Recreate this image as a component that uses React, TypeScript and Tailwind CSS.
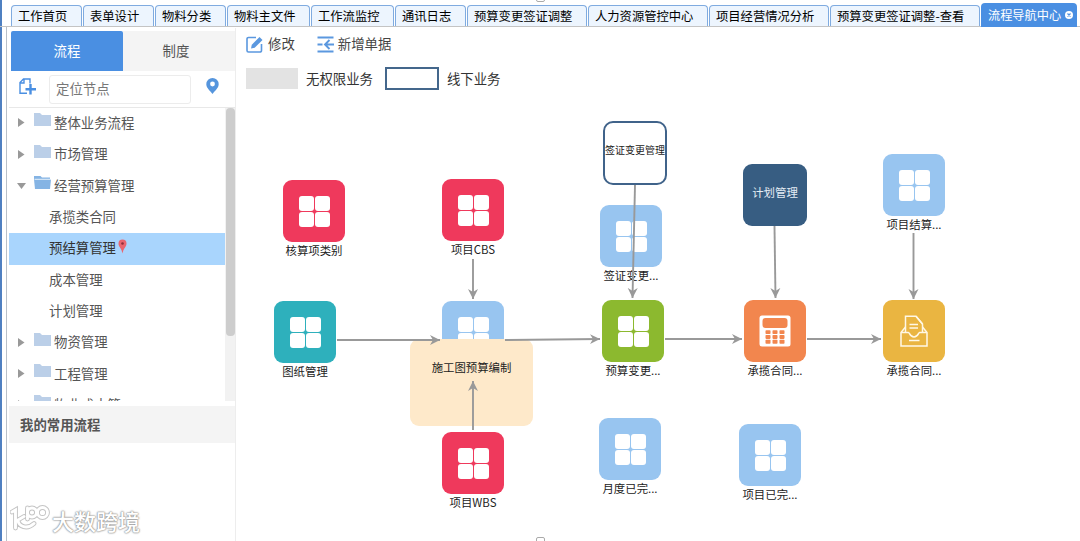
import React, { useState } from 'react';

type IconKind = 'grid' | 'calc' | 'inbox';

interface FlowNode {
  x: number;
  y: number;
  label: string;
  color: string;
  icon?: IconKind;
}

interface TreeItem {
  label: string;
  kind: 'closed' | 'open' | 'leaf';
}

const tabs = [
  { label: '工作首页', width: 'w-[72px]' },
  { label: '表单设计', width: 'w-[72px]' },
  { label: '物料分类', width: 'w-[72px]' },
  { label: '物料主文件', width: 'w-[84px]' },
  { label: '工作流监控', width: 'w-[84px]' },
  { label: '通讯日志', width: 'w-[72px]' },
  { label: '预算变更签证调整', width: 'w-[121px]' },
  { label: '人力资源管控中心', width: 'w-[121px]' },
  { label: '项目经营情况分析', width: 'w-[121px]' },
  { label: '预算变更签证调整-查看', width: 'w-[151px]' },
];

const tree: TreeItem[] = [
  { label: '整体业务流程', kind: 'closed' },
  { label: '市场管理', kind: 'closed' },
  { label: '经营预算管理', kind: 'open' },
  { label: '承揽类合同', kind: 'leaf' },
  { label: '预结算管理', kind: 'leaf' },
  { label: '成本管理', kind: 'leaf' },
  { label: '计划管理', kind: 'leaf' },
  { label: '物资管理', kind: 'closed' },
  { label: '工程管理', kind: 'closed' },
  { label: '物业成本管', kind: 'closed' },
];

// Node coordinates are relative to the canvas (which starts at 237,28)
const nodes: FlowNode[] = [
  { x: 46, y: 152, label: '核算项类别', color: 'bg-[#ef395c]' },
  { x: 205, y: 151, label: '项目CBS', color: 'bg-[#ef395c]' },
  { x: 37, y: 273, label: '图纸管理', color: 'bg-[#2eb0bc]' },
  { x: 205, y: 273, label: '', color: 'bg-[#98c5f0]' },
  { x: 205, y: 404, label: '项目WBS', color: 'bg-[#ef395c]' },
  { x: 363, y: 177, label: '签证变更...', color: 'bg-[#98c5f0]' },
  { x: 365, y: 272, label: '预算变更...', color: 'bg-[#8cb92f]' },
  { x: 362, y: 390, label: '月度已完...', color: 'bg-[#98c5f0]' },
  { x: 502, y: 396, label: '项目已完...', color: 'bg-[#98c5f0]' },
  { x: 507, y: 272, label: '承揽合同...', color: 'bg-[#f2864e]', icon: 'calc' },
  { x: 646, y: 126, label: '项目结算...', color: 'bg-[#98c5f0]' },
  { x: 646, y: 272, label: '承揽合同...', color: 'bg-[#eab541]', icon: 'inbox' },
];

const links = [
  [236, 231, 236, 271],
  [100, 312, 203, 312],
  [268, 312, 363, 311],
  [236, 402, 236, 353],
  [398, 157, 395.5, 270],
  [428, 311, 505, 311],
  [537.5, 198, 538.5, 270],
  [570, 311, 644, 311],
  [676.5, 205, 676.5, 271],
];

function NodeIcon({ kind = 'grid' }: { kind?: IconKind }) {
  if (kind === 'calc') {
    return (
      <svg width="32" height="32" viewBox="0 0 32 32">
        <rect x="0.5" y="0.5" width="31" height="31" rx="2.5" fill="#fff" />
        <rect x="3.5" y="3" width="25" height="10" rx="3" fill="#f2864e" />
        {[0, 1, 2].map((r) =>
          [0, 1, 2].map((c) => (
            <rect key={`${r}${c}`} x={6.5 + c * 7} y={15.2 + r * 4.8} width="5" height="3.900" rx="0.8" fill="#f2864e" />
          ))
        )}
      </svg>
    );
  }
  if (kind === 'inbox') {
    return (
      <svg width="28" height="32" viewBox="0 0 28 32" fill="none" stroke="#fff8e6" strokeWidth="1.500">
        <path d="M5.500 18V1.200h10.500L22.500 9v9" />
        <path d="M16 1.200L22.500 9" />
        <path d="M5.500 12L1 17.500V31h26V17.500L22.500 12" />
        <path d="M1 17.500h7.500c1 0 1.500 4.500 5.500 4.500s4.500-4.500 5.500-4.500H27" />
        <path d="M9.500 9.500h8.500M9.500 13h8.500M9 25.500h10.500" />
      </svg>
    );
  }
  return (
    <div className="grid grid-cols-2 gap-px">
      <i className="size-[15px] rounded-[3px] bg-white" />
      <i className="size-[15px] rounded-[3px] bg-white" />
      <i className="size-[15px] rounded-[3px] bg-white" />
      <i className="size-[15px] rounded-[3px] bg-white" />
    </div>
  );
}

function Folder({ open }: { open: boolean }) {
  if (open) {
    return (
      <svg width="17" height="13" viewBox="0 0 17 13">
        <path d="M0 0h6.500l1.500 1.500h8V4H0z" fill="#85b4e4" />
        <path d="M0 3.500h17L16 13H1z" fill="#85b4e4" />
        <path d="M0.500 3.300h16" stroke="#fff" strokeWidth="0.8" />
      </svg>
    );
  }
  return (
    <svg width="17" height="13" viewBox="0 0 17 13">
      <path d="M0 0h6l2 2h9v11H0z" fill="#bbcfe8" />
    </svg>
  );
}

function TabStrip() {
  return (
    <header className="flex h-[27px] shrink-0 items-end border-b border-[#c4c4c4] pl-[11px]">
      {tabs.map((tab) => (
        <div key={tab.label} className={`${tab.width} h-[21px] shrink-0 pr-px`}>
          <div className="flex h-full items-center rounded-t-[4px] border border-b-0 border-[#7fabe0] bg-[#edf5fe] pl-[6px] text-[12.3px] whitespace-nowrap text-black">
            {tab.label}
          </div>
        </div>
      ))}
      <div className="-mb-px flex h-[24px] w-[96px] shrink-0 items-center rounded-t-[4px] bg-[#4a8fe2] pl-[7px] text-[12.2px] whitespace-nowrap text-white">
        流程导航中心
        <svg className="ml-[4px]" width="8" height="8" viewBox="0 0 8 8">
          <circle cx="4" cy="4" r="4" fill="#fff" />
          <path d="M2.500 2.500l3 3m0-3l-3 3" stroke="#4a8fe2" strokeWidth="1.200" />
        </svg>
      </div>
    </header>
  );
}

const watermarkPaths = (
  <>
    <path d="M2 7l3.500-2v18M14 11.500l-6 3.500c0.500 6.500 9 10 16 3.500M17.500 3v11" />
    <circle cx="22" cy="7.500" r="4.500" />
    <circle cx="32.500" cy="7.500" r="5" />
  </>
);

function Sidebar() {
  const [selected, setSelected] = useState('预结算管理');

  return (
    <aside className="flex w-[227px] shrink-0 flex-col border-r border-[#ededed] text-[13.4px] text-[#555]">
      <div className="mt-[3px] flex h-[40px] shrink-0 pl-[2px]">
        <div className="flex w-[112px] items-center justify-center rounded-tl-[2px] rounded-tr-[2px] bg-[#4a8fe2] text-white">流程</div>
        <div className="flex flex-1 items-center justify-center bg-[#f4f4f4] pr-[6px]">制度</div>
      </div>
      <div className="flex h-[37px] shrink-0 items-center border-b border-[#e8e8e8] pl-[10px]">
        <svg className="mb-[5px]" width="17" height="17" viewBox="0 0 17 17" fill="none" stroke="#4a8fe2" strokeWidth="1.400">
          <path d="M11 5.500V1H4.500L1 4.500V15.300h7M1.500 5h3.500V1.500" />
          <path d="M11.500 6v10.500M6.500 11.200h10.500" strokeWidth="2.400" />
        </svg>
        <div className="ml-[13px] flex h-[29px] w-[142px] items-center rounded-[3px] border border-[#ececec] pl-[6px] text-[#777]">
          定位节点
        </div>
        <svg className="mb-[7px] ml-[15px]" width="13" height="16" viewBox="0 0 13 16">
          <path d="M6.500 0a6.200 6.200 0 0 0-6.200 6.200C0.300 10 4 12.500 6.500 16c2.500-3.500 6.200-6 6.200-9.800A6.200 6.200 0 0 0 6.500 0z" fill="#5595dd" />
          <circle cx="6.500" cy="6" r="2.400" fill="#fff" />
        </svg>
      </div>
      <div className="flex h-[293px] shrink-0">
        <div className="w-[216px] overflow-hidden">
          {tree.map((item) => (
            <div
              key={item.label}
              onClick={() => setSelected(item.label)}
              className={`flex h-[31.35px] items-center pb-[2px] whitespace-nowrap ${
                item.label === selected ? 'bg-[#a9d5fd] text-[#333]' : ''
              } ${item.kind === 'leaf' ? 'pl-[40px]' : 'pl-[8px]'}`}
            >
              {item.kind !== 'leaf' && (
                <>
                  <svg className="mr-[8px] shrink-0" width="9" height="9" viewBox="0 0 9 9" fill="#999">
                    {item.kind === 'open' ? <path d="M0 2h9L4.500 8z" /> : <path d="M1 0l6.500 4.500L1 9z" />}
                  </svg>
                  <span className="mr-[3px] mb-[6px]">
                    <Folder open={item.kind === 'open'} />
                  </span>
                </>
              )}
              <span>{item.label}</span>
              {item.label === selected && (
                <svg className="mb-[4px] ml-[2px]" width="9" height="15" viewBox="0 0 9 15">
                  <path d="M4.500 0.500a4 4 0 0 0-4 4C0.500 8 3.500 9 4.500 14.500 5.500 9 8.500 8 8.500 4.500a4 4 0 0 0-4-4z" fill="#e96570" />
                  <circle cx="4.500" cy="4.500" r="1.300" fill="#8d2f3a" />
                </svg>
              )}
            </div>
          ))}
        </div>
        <div className="w-[10px] bg-[#f2f2f2]">
          <div className="ml-px h-[228px] rounded-[4px] bg-[#cdcdcd]" />
        </div>
      </div>
      <div className="mt-[5px] flex h-[37px] shrink-0 items-center bg-[#f4f4f4] pl-[11px] font-bold">我的常用流程</div>
      <div className="flex flex-1 items-start pt-[62px]">
        <svg className="ml-px" width="40" height="30" viewBox="0 0 40 30" fill="none" strokeLinecap="round">
          <g stroke="#c4c4c4" strokeWidth="4.800">{watermarkPaths}</g>
          <g stroke="#fff" strokeWidth="2.900">{watermarkPaths}</g>
        </svg>
        <span className="ml-[2px] text-[22px] leading-[30px] font-medium whitespace-nowrap text-white [text-shadow:0_0_1px_#888,0_0_2px_#999,0_0_2px_#aaa]">
          大数跨境
        </span>
      </div>
    </aside>
  );
}

function FlowCanvas() {
  return (
    <section className="relative ml-px flex-1 text-[#333]">
      <div className="flex h-[32px] items-center pl-[9px] text-[13.4px] text-[#444]">
        <svg width="17" height="17" viewBox="0 0 17 17" fill="none" stroke="#5b98df" strokeWidth="1.600">
          <path d="M10 1.500H2.500a1.500 1.500 0 0 0-1.500 1.500v11.500A1.500 1.500 0 0 0 2.500 16h11.500a1.500 1.500 0 0 0 1.500-1.500V8" />
          <path d="M5 12.500l0.800-3.700L13.500 1l3 3-7.800 7.700z" fill="#5b98df" stroke="none" />
        </svg>
        <span className="ml-[5px]">修改</span>
        <svg className="ml-[22px]" width="17" height="17" viewBox="0 0 17 17" fill="none" stroke="#5b98df" strokeWidth="1.900">
          <path d="M0.500 1.500h16M0.500 15.500h16M0.500 8.500h5M8 8.500h9M12.500 4l-4.500 4.500 4.500 4.500" />
        </svg>
        <span className="ml-[4px]">新增单据</span>
      </div>
      <div className="flex h-[37px] items-center pl-[9px] text-[13.4px]">
        <div className="h-[21px] w-[52px] bg-[#e3e3e3]" />
        <span className="ml-[8px]">无权限业务</span>
        <div className="ml-[12px] h-[23px] w-[54px] border-2 border-[#44678c]" />
        <span className="ml-[8px]">线下业务</span>
      </div>

      {nodes.map((node, i) => (
        <div key={i} className="absolute flex w-[62px] flex-col items-center" style={{ left: node.x, top: node.y }}>
          <div className={`flex size-[62px] shrink-0 items-center justify-center rounded-[9px] ${node.color}`}>
            <NodeIcon kind={node.icon} />
          </div>
          <span className="text-[11.4px] leading-[16px] whitespace-nowrap text-[#222]">{node.label}</span>
        </div>
      ))}
      <div className="absolute top-[311px] left-[173px] flex h-[87px] w-[123px] justify-center rounded-[9px] bg-[#fee9ca] pt-[18px] text-[11.4px] leading-[20px] text-[#222]">
        施工图预算编制
      </div>
      <div className="absolute top-[93px] left-[366px] flex h-[64px] w-[64px] items-center justify-center rounded-[10px] border-2 border-[#40638a] bg-white pb-[6px] text-[10px] whitespace-nowrap text-[#222]">
        签证变更管理
      </div>
      <div className="absolute top-[136px] left-[506px] flex h-[62px] w-[64px] items-center justify-center rounded-[9px] bg-[#375d82] pb-[4px] text-[11.4px] text-[#e4ecf4]">
        计划管理
      </div>

      <svg className="pointer-events-none absolute inset-0 h-full w-full">
        <defs>
          <marker id="arrow" markerWidth="11" markerHeight="12" refX="10" refY="6" orient="auto" markerUnits="userSpaceOnUse">
            <path d="M0 1l10 5-10 5 3-5z" fill="#999" />
          </marker>
        </defs>
        {links.map(([x1, y1, x2, y2], i) => (
          <line key={i} x1={x1} y1={y1} x2={x2} y2={y2} stroke="#999" strokeWidth="1.900" markerEnd="url(#arrow)" />
        ))}
      </svg>
    </section>
  );
}

export default function App() {
  return (
    <main className="relative flex h-[541px] w-[1080px] overflow-hidden bg-white font-['Noto_Sans_CJK_SC',sans-serif] leading-none">
      <div className="w-[2px] shrink-0 bg-[#4f80c1]" />
      <div className="-ml-[2px] flex flex-1 flex-col">
        <TabStrip />
        <div className="ml-[6px] flex flex-1 border-l border-[#b9c0c8] pt-px pl-[2px]">
          <Sidebar />
          <FlowCanvas />
        </div>
      </div>
      {/* splitter handles */}
      <div className="absolute -top-[4px] left-[536px] h-[6px] w-[9px] rounded-[2px] border border-[#aaa] bg-white" />
      <div className="absolute top-[537px] left-[536px] h-[8px] w-[9px] rounded-[2px] border border-[#aaa] bg-white" />
    </main>
  );
}
